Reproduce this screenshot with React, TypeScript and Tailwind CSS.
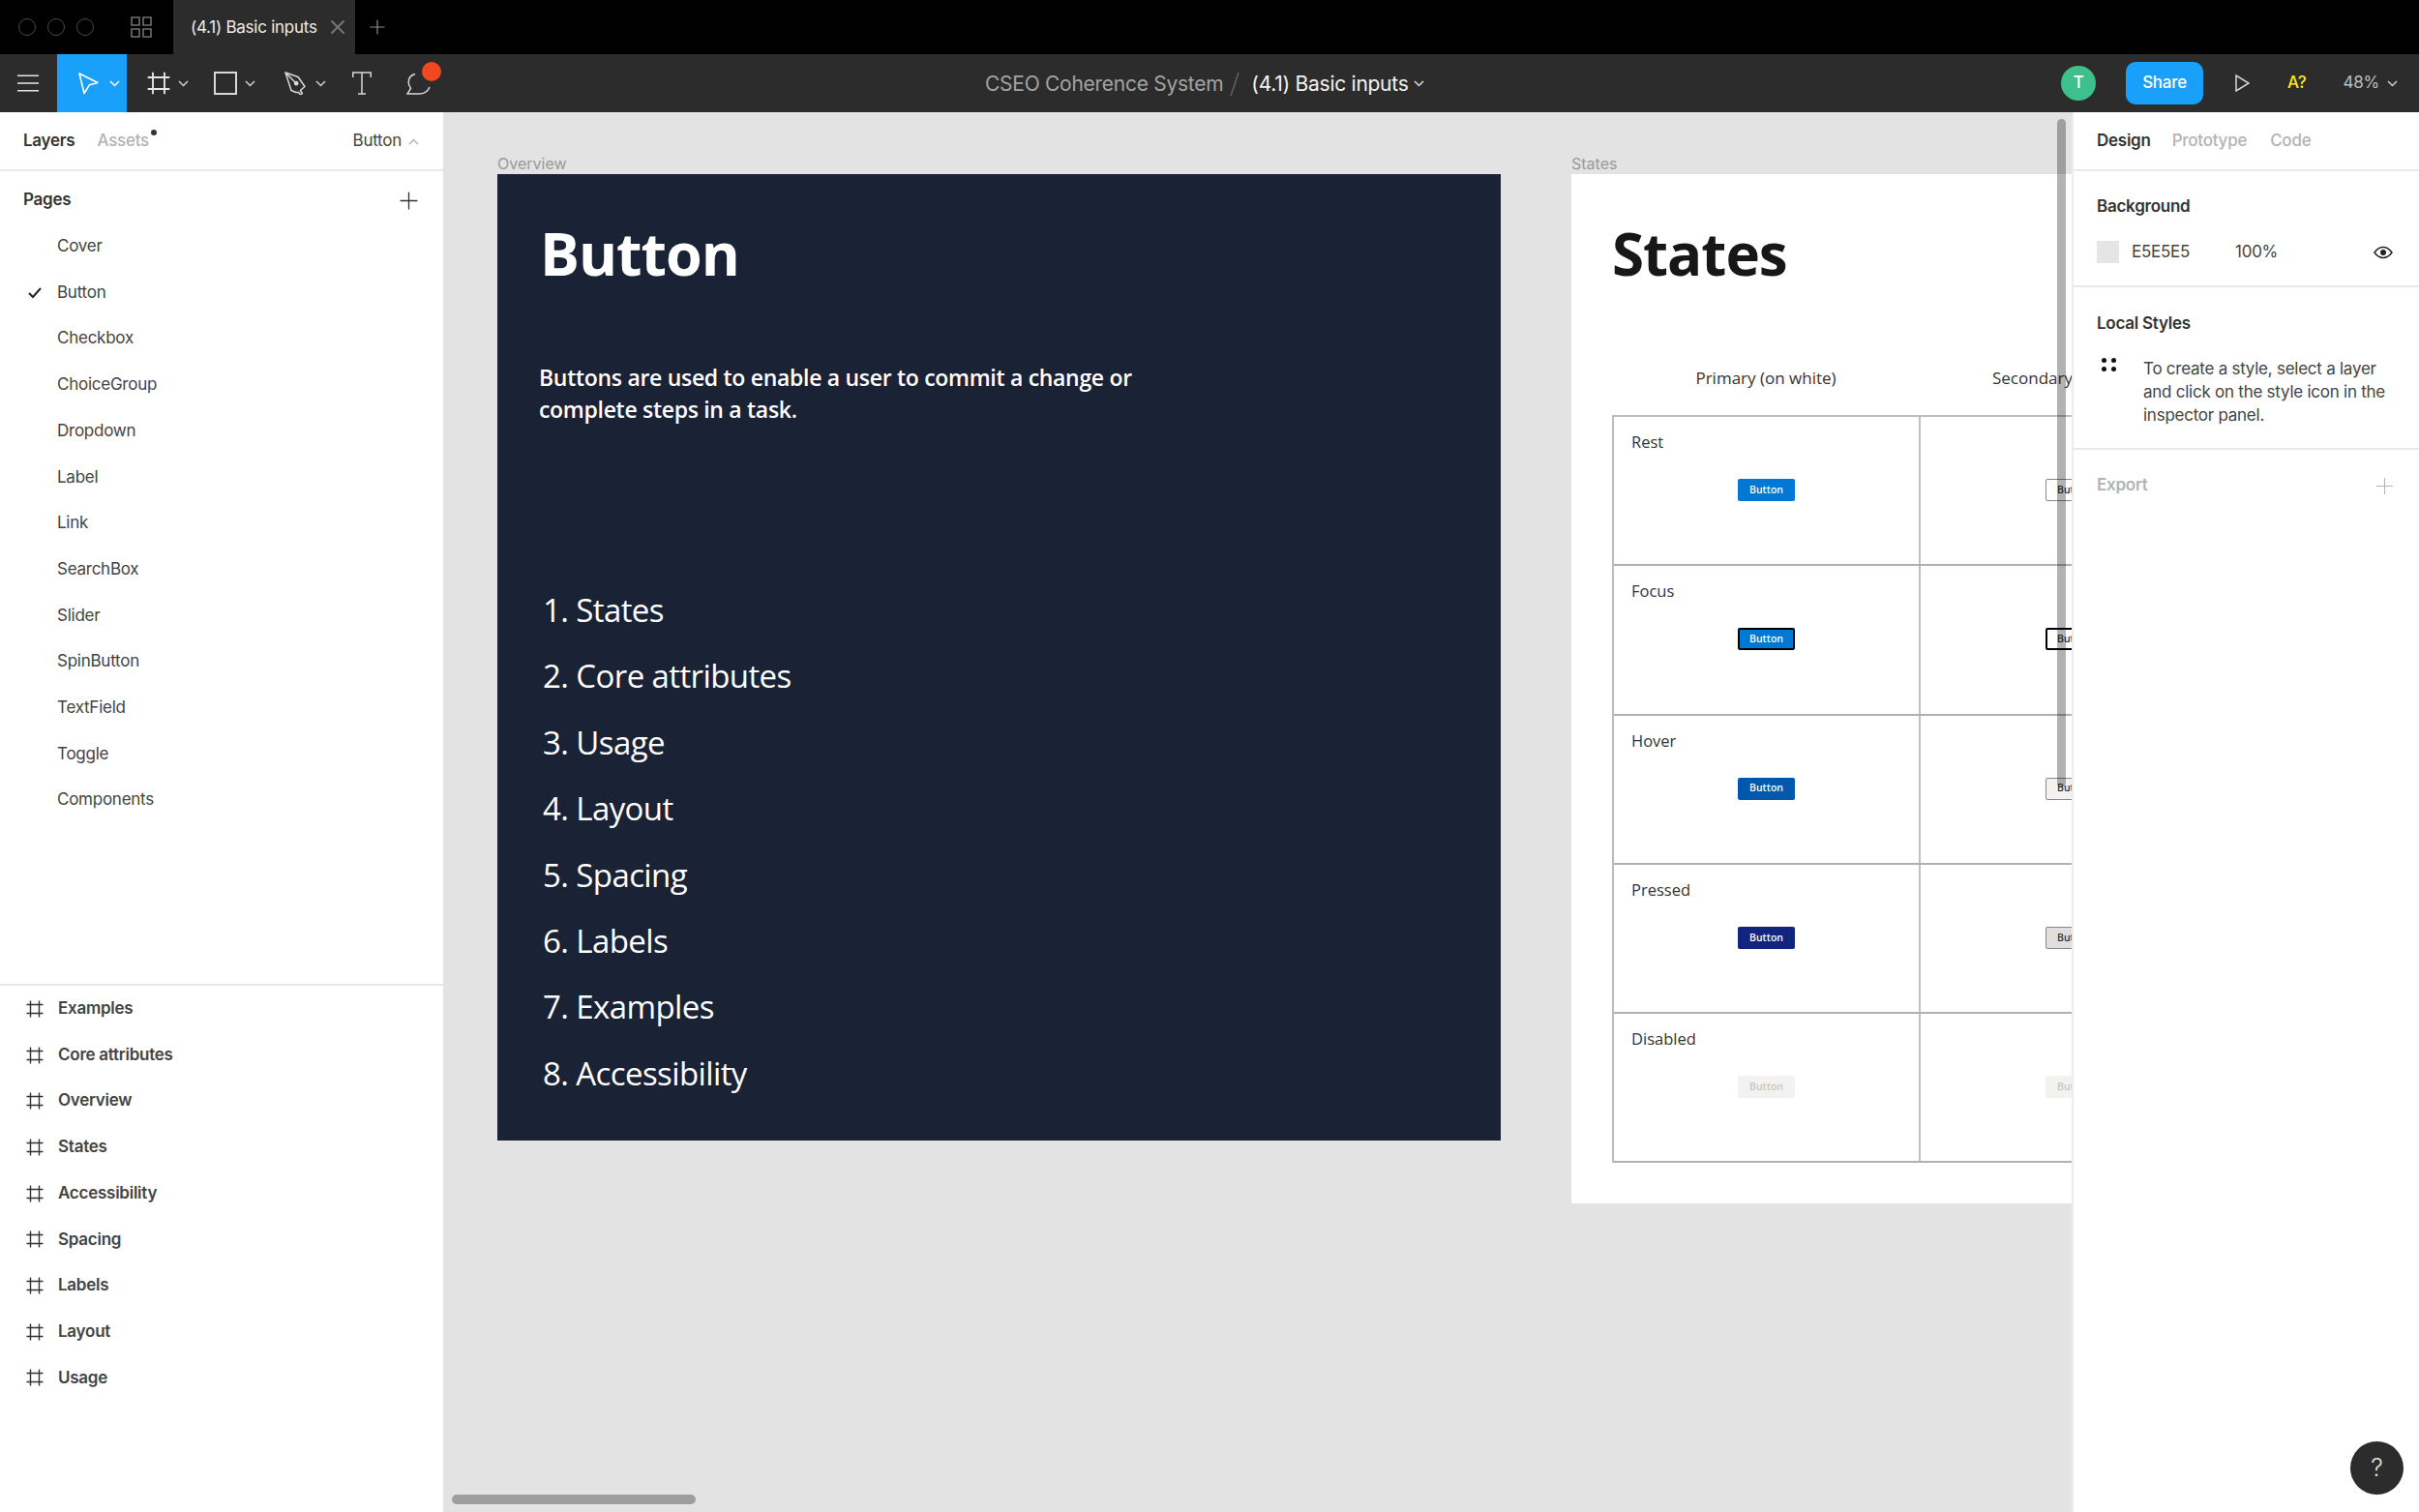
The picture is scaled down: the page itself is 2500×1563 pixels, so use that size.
import { Plus, X } from "lucide-react";

const pages = ["Cover", "Button", "Checkbox", "ChoiceGroup", "Dropdown", "Label", "Link", "SearchBox", "Slider", "SpinButton", "TextField", "Toggle", "Components"];
const layers = ["Examples", "Core attributes", "Overview", "States", "Accessibility", "Spacing", "Labels", "Layout", "Usage"];
const toc = ["1. States", "2. Core attributes", "3. Usage", "4. Layout", "5. Spacing", "6. Labels", "7. Examples", "8. Accessibility"];

const primary: Record<string, string> = {
  Rest: "bg-[#0078d4] text-white",
  Focus: "bg-[#0078d4] text-white border-2 border-black",
  Hover: "bg-[#0057ae] text-white",
  Pressed: "bg-[#11257e] text-white",
  Disabled: "bg-[#f3f2f1] text-[#c8c6c4]",
};
const secondary: Record<string, string> = {
  Rest: "bg-white text-[#323130] border border-[#8a8886]",
  Focus: "bg-white text-[#323130] border-2 border-black",
  Hover: "bg-[#f3f2f1] text-[#323130] border border-[#8a8886]",
  Pressed: "bg-[#e1dfdd] text-[#323130] border border-[#8a8886]",
  Disabled: "bg-[#f3f2f1] text-[#c8c6c4]",
};

function Chevron({ up, className }: { up?: boolean; className?: string }) {
  return (
    <svg width="11" height="7" viewBox="0 0 11 7" fill="none" stroke="currentColor" strokeWidth="1.5" className={className}>
      <path d={up ? "M1 6l4.5-4.5L10 6" : "M1 1l4.5 4.5L10 1"} />
    </svg>
  );
}

function FrameIcon({ size = 18, className }: { size?: number; className?: string }) {
  return (
    <svg width={size} height={size} viewBox="0 0 18 18" fill="none" stroke="currentColor" strokeWidth="1.4" className={className}>
      <path d="M4.5 0.5v17M13.5 0.5v17M0.5 4.5h17M0.5 13.5h17" />
    </svg>
  );
}

function Tool({ children, chevron, className }: { children: React.ReactNode; chevron?: boolean; className?: string }) {
  return (
    <div className={`flex items-center text-[#e6e6e6] ${className ?? ""}`}>
      {children}
      {chevron && <Chevron className="ml-[8px] text-[#d0d0d0]" />}
    </div>
  );
}

function TopBar() {
  return (
    <div className="flex h-[56px] bg-black items-center text-[#8c8c8c]">
      <div className="flex gap-[12px] pl-[19px] w-[135px]">
        <div className="w-[18px] h-[18px] rounded-full border border-[#4a4a4a]" />
        <div className="w-[18px] h-[18px] rounded-full border border-[#4a4a4a]" />
        <div className="w-[18px] h-[18px] rounded-full border border-[#4a4a4a]" />
      </div>
      <div className="w-[44px]">
        <svg width="22" height="22" viewBox="0 0 22 22" fill="none" stroke="#707070" strokeWidth="1.6">
          <path d="M1 1h8v8H1zM13 1h8v8h-8zM1 13h8v8H1zM13 13h8v8h-8z" />
        </svg>
      </div>
      <div className="flex items-center w-[188px] h-full bg-[#2c2c2c] pl-[18px]">
        <span className="text-[17px] tracking-[-0.25px] pt-[1px] text-[#ececec] w-[140px] whitespace-nowrap">(4.1) Basic inputs</span>
        <X size={24} strokeWidth={2} className="text-[#777]" />
      </div>
      <Plus size={24} strokeWidth={1.2} className="ml-[11px] text-[#8c8c8c]" />
    </div>
  );
}

function ToolBar() {
  return (
    <div className="flex h-[60px] bg-[#2c2c2c] items-center relative">
      <div className="w-[59px] flex justify-center">
        <svg width="22" height="18" viewBox="0 0 22 18" fill="none" stroke="#e6e6e6" strokeWidth="1.5" className="-ml-[1px]">
          <path d="M0 1.2h22M0 9h22M0 16.8h22" />
        </svg>
      </div>
      <div className="w-[72px] h-full bg-[#18a0fb] flex items-center pl-[22px] text-white">
        <svg width="21" height="23" viewBox="0 0 21 23" fill="none" stroke="white" strokeWidth="1.6" strokeLinejoin="round">
          <path d="M1 1l19 9.5-8.5 2.2L6 21.5z" />
        </svg>
        <Chevron className="ml-[11px]" />
      </div>
      <Tool chevron className="ml-[21px]">
        <FrameIcon size={24} />
      </Tool>
      <Tool chevron className="ml-[26px]">
        <div className="w-[24px] h-[24px] border-2 border-[#d8d8d8]" />
      </Tool>
      <Tool chevron className="ml-[30px]">
        <svg width="24" height="24" viewBox="0 0 24 24" fill="none" stroke="#d8d8d8" strokeWidth="1.5" strokeLinejoin="round">
          <path d="M1 1l13 4.5 7 10-3.5 3-1 1.500 2 2.500-2 1.500-2-2.500H12l-5-2z" />
          <path d="M1 1l10.500 10.500" />
          <circle cx="12.200" cy="12.200" r="1.600" fill="#d8d8d8" />
        </svg>
      </Tool>
      <svg width="20" height="24" viewBox="0 0 20 24" fill="none" stroke="#d8d8d8" strokeWidth="1.5" className="ml-[27px]">
        <path d="M0.8 6V1h18.400v5M10 1v22M6 23h8" />
      </svg>
      <div className="relative ml-[36px] w-[26px] h-[24px]">
        <svg width="26" height="24" viewBox="0 0 26 24" fill="none" stroke="#d8d8d8" strokeWidth="1.5">
          <path d="M9 2.500C4 4 1.500 8 2.500 13c.5 2 1.500 3 2 4.500L1 23h12c5 0 9-2.500 11-7" />
        </svg>
        <div className="absolute left-[16px] -top-[10px] w-[20px] h-[20px] rounded-full bg-[#f24822]" />
      </div>
      <div className="absolute left-[1018px] top-0 h-full pt-[1px] flex items-center text-[21px] tracking-[-0.27px] whitespace-nowrap">
        <span className="text-[#a3a3a3]">CSEO Coherence System</span>
        <svg width="12" height="26" viewBox="0 0 12 26" stroke="#6e6e6e" strokeWidth="1.2" className="ml-[6px]">
          <path d="M10 1L2 25" />
        </svg>
        <span className="text-[#f2f2f2] ml-[11px]">(4.1) Basic inputs</span>
        <Chevron className="ml-[6px] text-[#ddd]" />
      </div>
      <div className="ml-auto flex items-center pr-[22px] text-[17px] tracking-[-0.25px]">
        <div className="w-[36px] h-[36px] rounded-full bg-[#3dc08c] text-white flex items-center justify-center font-medium">T</div>
        <div className="w-[80px] h-[44px] ml-[31px] rounded-[10px] bg-[#18a0fb] text-white flex items-center justify-center font-medium">Share</div>
        <svg width="15" height="18" viewBox="0 0 15 18" fill="none" stroke="#d8d8d8" strokeWidth="1.5" className="ml-[33px]">
          <path d="M1 1v16l13-8z" />
        </svg>
        <span className="ml-[39px] font-medium text-[#ffeb00]">A?</span>
        <span className="ml-[38px] text-[#bdbdbd]">48%</span>
        <Chevron className="ml-[8px] text-[#ccc]" />
      </div>
    </div>
  );
}

function LeftPanel() {
  return (
    <div className="w-[458px] shrink-0 bg-white flex flex-col text-[17px] tracking-[-0.25px] text-[#333]">
      <div className="flex items-center h-[61px] shrink-0 pl-[24px] pr-[24px] pt-[1px] border-b-2 border-[#e8e8e8]">
        <span className="font-semibold">Layers</span>
        <span className="ml-[23px] text-[#b3b3b3] relative font-medium">
          Assets
          <span className="absolute -right-[8px] top-[1px] w-[6px] h-[6px] rounded-full bg-[#333]" />
        </span>
        <span className="ml-auto text-[#444]">Button</span>
        <Chevron up className="ml-[7px] mr-[1px] text-[#b3b3b3]" />
      </div>
      <div className="flex items-center justify-between h-[54px] shrink-0 pt-[6px] pl-[24px] pr-[21px]">
        <span className="font-semibold">Pages</span>
        <Plus size={29} strokeWidth={1.1} />
      </div>
      <div className="flex-1">
        {pages.map((p) => (
          <div key={p} className="relative flex items-center h-[47.7px] pl-[59px] text-[#444]">
            {p === "Button" && (
              <svg width="14" height="12" viewBox="0 0 14 12" fill="none" stroke="#222" strokeWidth="2" className="absolute left-[29px]">
                <path d="M1 6l4 4 8-9" />
              </svg>
            )}
            {p}
          </div>
        ))}
      </div>
      <div className="border-t-2 border-[#e8e8e8] h-[546px] shrink-0">
        {layers.map((l) => (
          <div key={l} className="flex items-center h-[47.7px] pl-[27px] font-semibold text-[#444]">
            <FrameIcon className="mr-[15px] text-[#333]" />
            {l}
          </div>
        ))}
      </div>
    </div>
  );
}

function OverviewFrame() {
  return (
    <div className="absolute left-[56px] top-[43px]">
      <div className="h-[21px] text-[16px] leading-[20px] text-[#999]">Overview</div>
      <div className="w-[1037px] h-[999px] bg-[#1a2235] text-white font-['Open_Sans',sans-serif]">
        <h1 className="pl-[44px] pt-[41px] h-[174px] text-[61px] leading-[82px] font-bold tracking-[-1px]">Button</h1>
        <p className="pl-[43px] mt-[20px] w-[700px] text-[23px] leading-[33px] font-semibold tracking-[-0.3px]">
          Buttons are used to enable a user to commit a change or complete steps in a task.
        </p>
        <div className="mt-[157px] pl-[47px]">
          {toc.map((t) => (
            <div key={t} className="h-[68.4px] text-[33px] leading-[68.4px] font-medium tracking-[-0.6px]">{t}</div>
          ))}
        </div>
      </div>
    </div>
  );
}

function DemoButton({ cls }: { cls: string }) {
  return (
    <div className={`w-[59px] h-[23px] mx-auto rounded-[2px] flex items-center justify-center text-[10.5px] font-semibold ${cls}`}>
      Button
    </div>
  );
}

function StatesFrame() {
  const rows = ["Rest", "Focus", "Hover", "Pressed", "Disabled"];
  return (
    <div className="absolute left-[1166px] top-[43px]">
      <div className="h-[21px] text-[16px] leading-[20px] text-[#999]">States</div>
      <div className="w-[1100px] h-[1064px] bg-white pl-[42px] font-['Open_Sans',sans-serif]">
        <h1 className="pt-[41px] h-[174px] text-[60px] leading-[82px] font-bold tracking-[-1px] text-[#171717]">States</h1>
        <div className="grid grid-cols-[318px_317px] h-[74px] items-center text-[17px] font-medium text-[#333]">
          <div className="text-center">Primary (on white)</div>
          <div className="pl-[75px]">Secondary</div>
        </div>
        <div className="w-[636px] mt-[1px] border-t-2 border-l-2 border-[#bdbdbd]">
          {rows.map((r) => (
            <div key={r} className="grid grid-cols-[317px_317px] h-[154.3px] border-b-2 border-[#b0b0b0]">
              <div className="border-r-2 border-[#c0c0c0]">
                <div className="h-[64px] pl-[18px] pt-[14px] text-[16.5px] leading-[24px] text-[#333]">{r}</div>
                <DemoButton cls={primary[r]} />
              </div>
              <div>
                <div className="h-[64px]" />
                <DemoButton cls={secondary[r]} />
              </div>
            </div>
          ))}
        </div>
      </div>
    </div>
  );
}

function Canvas() {
  return (
    <div className="relative flex-1 bg-[#e3e3e3] overflow-hidden">
      <OverviewFrame />
      <StatesFrame />
      <div className="absolute left-[1668px] top-[7px] w-[9px] h-[691px] rounded-full bg-black/30" />
      <div className="absolute left-[9px] top-[1429px] w-[252px] h-[10px] rounded-full bg-black/30" />
    </div>
  );
}

function RightPanel() {
  return (
    <div className="relative w-[359px] shrink-0 bg-white border-l-2 border-[#ececec] text-[17px] tracking-[-0.25px] text-[#333]">
      <div className="flex items-center h-[61px] pl-[24px] pt-[1px] gap-[22px] border-b-2 border-[#e8e8e8] font-medium">
        <span className="font-semibold">Design</span>
        <span className="text-[#b3b3b3]">Prototype</span>
        <span className="text-[#b3b3b3] ml-[2px]">Code</span>
      </div>
      <div className="h-[120px] border-b-2 border-[#e8e8e8] pl-[24px]">
        <div className="pt-[24px] h-[72px] font-semibold leading-[24px]">Background</div>
        <div className="flex items-center h-[23px] text-[#444]">
          <div className="w-[23px] h-[23px] bg-[#e5e5e5]" />
          <span className="ml-[13px] w-[107px]">E5E5E5</span>
          <span>100%</span>
          <svg width="20" height="14" viewBox="0 0 20 14" fill="none" stroke="#222" strokeWidth="1.5" className="ml-[99px]">
            <path d="M1 7c2.500-3.500 5.500-5.500 9-5.500s6.500 2 9 5.500c-2.500 3.500-5.500 5.500-9 5.500S3.500 10.500 1 7z" />
            <circle cx="10" cy="7" r="3" fill="#222" stroke="none" />
          </svg>
        </div>
      </div>
      <div className="h-[168px] border-b-2 border-[#e8e8e8] pl-[24px]">
        <div className="pt-[25px] h-[72px] font-semibold leading-[24px]">Local Styles</div>
        <div className="flex text-[#444]">
          <div className="grid grid-cols-2 gap-x-[4px] gap-y-[4px] w-[48px] h-[14px] content-start pl-[5px] pt-[1px]">
            <span className="w-[5px] h-[5px] rounded-full bg-[#111] block" />
            <span className="w-[5px] h-[5px] rounded-full bg-[#111] block -ml-[14px]" />
            <span className="w-[5px] h-[5px] rounded-full bg-[#111] block" />
            <span className="w-[5px] h-[5px] rounded-full bg-[#111] block -ml-[14px]" />
          </div>
          <p className="w-[270px] leading-[24px]">To create a style, select a layer and click on the style icon in the inspector panel.</p>
        </div>
      </div>
      <div className="flex items-center justify-between h-[74px] pl-[24px] pr-[22px] font-semibold text-[#b3b3b3]">
        <span>Export</span>
        <Plus size={27} strokeWidth={1} />
      </div>
      <div className="absolute right-[16px] bottom-[18px] w-[55px] h-[55px] rounded-full bg-[#2c2c2c] text-[#e0e0e0] flex items-center justify-center text-[25px] font-light">?</div>
    </div>
  );
}

export default function App() {
  return (
    <div className="w-[2500px] h-[1563px] flex flex-col overflow-hidden font-['Inter',sans-serif]">
      <TopBar />
      <ToolBar />
      <div className="flex flex-1 min-h-0">
        <LeftPanel />
        <Canvas />
        <RightPanel />
      </div>
    </div>
  );
}
